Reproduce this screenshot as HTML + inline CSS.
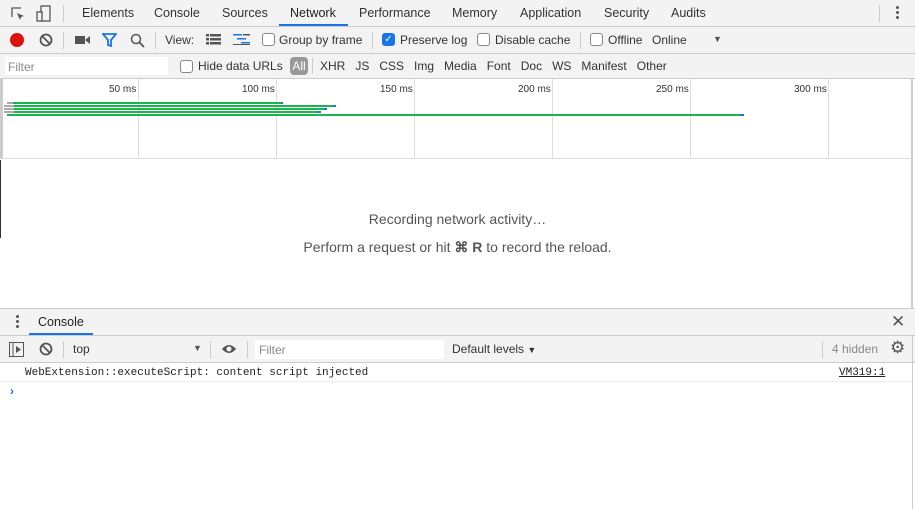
<!DOCTYPE html>
<html><head><meta charset="utf-8"><style>
*{box-sizing:border-box;margin:0;padding:0}
body{width:915px;height:509px;overflow:hidden;background:#fff;font-family:"Liberation Sans",sans-serif;font-size:12px;color:#333;position:relative}
.a{position:absolute;white-space:nowrap}
.bar{position:absolute;left:0;width:915px;background:#f3f3f3;border-bottom:1px solid #ccc}
.sep{position:absolute;width:1px;background:#ccc}
.cb{position:absolute;width:13px;height:13px;border:1px solid #888;border-radius:3px;background:#fff}
.g{position:absolute;height:2px;background:#1db34f}
.vl{position:absolute;top:79px;height:80px;width:1px;background:#ddd}
.t{position:absolute;top:84px;font-size:10px;color:#333}
</style></head><body>
<!-- tab bar -->
<div class="bar" style="top:0;height:27px"></div>
<svg class="a" style="left:9px;top:5px" width="18" height="18" viewBox="0 0 18 18"><path d="M3 12V3h9" fill="none" stroke="#555" stroke-width="1.3"/><path d="M8 8l7 3-3 1-1 3z" fill="#555"/></svg>
<svg class="a" style="left:36px;top:5px" width="16" height="18" viewBox="0 0 16 18"><rect x="5" y="1" width="9" height="15" fill="none" stroke="#555" stroke-width="1.3"/><rect x="1" y="7" width="5" height="9" fill="#f3f3f3" stroke="#555" stroke-width="1.3"/></svg>
<div class="sep" style="left:63px;top:5px;height:17px"></div>
<div class="a" style="left:82px;top:6px;font-size:12.5px">Elements</div>
<div class="a" style="left:154px;top:6px;font-size:12.5px">Console</div>
<div class="a" style="left:222px;top:6px;font-size:12.5px">Sources</div>
<div class="a" style="left:290px;top:6px;font-size:12.5px;color:#222">Network</div>
<div class="a" style="left:279px;top:24px;width:69px;height:2px;background:#1a73e8"></div>
<div class="a" style="left:359px;top:6px;font-size:12.5px">Performance</div>
<div class="a" style="left:452px;top:6px;font-size:12.5px">Memory</div>
<div class="a" style="left:520px;top:6px;font-size:12.5px">Application</div>
<div class="a" style="left:604px;top:6px;font-size:12.5px">Security</div>
<div class="a" style="left:671px;top:6px;font-size:12.5px">Audits</div>
<div class="sep" style="left:879px;top:5px;height:17px"></div>
<div class="a" style="left:896px;top:6px;width:3px;height:3px;background:#555;border-radius:50%;box-shadow:0 5px #555,0 10px #555"></div>
<!-- network toolbar -->
<div class="bar" style="top:27px;height:27px"></div>
<div class="a" style="left:10px;top:33px;width:14px;height:14px;border-radius:50%;background:#e01010"></div>
<svg class="a" style="left:39px;top:33px" width="14" height="14"><circle cx="7" cy="7" r="5.5" fill="none" stroke="#555" stroke-width="1.8"/><path d="M3 3l8 8" stroke="#555" stroke-width="1.8"/></svg>
<div class="sep" style="left:63px;top:32px;height:17px"></div>
<svg class="a" style="left:75px;top:34px" width="16" height="12"><rect x="0" y="2" width="10" height="8" fill="#555"/><path d="M10 6l5-4v8z" fill="#555"/></svg>
<svg class="a" style="left:102px;top:33px" width="15" height="14"><path d="M1 1h13l-5 6v6l-3-1v-5z" fill="none" stroke="#1a73e8" stroke-width="1.8"/></svg>
<svg class="a" style="left:130px;top:33px" width="15" height="15"><circle cx="6" cy="6" r="4.5" fill="none" stroke="#555" stroke-width="1.5"/><path d="M9.5 9.5l4.5 4.5" stroke="#555" stroke-width="1.8"/></svg>
<div class="sep" style="left:155px;top:32px;height:17px"></div>
<div class="a" style="left:165px;top:33px">View:</div>
<svg class="a" style="left:206px;top:34px" width="16" height="11"><g fill="#555"><rect x="0" y="0" width="3" height="2.5"/><rect x="4" y="0" width="11" height="2.5"/><rect x="0" y="4" width="3" height="2.5"/><rect x="4" y="4" width="11" height="2.5"/><rect x="0" y="8" width="3" height="2.5"/><rect x="4" y="8" width="11" height="2.5"/></g></svg>
<svg class="a" style="left:233px;top:34px" width="18" height="12"><g fill="#1a73e8"><rect x="0" y="0" width="9" height="1.5"/><rect x="4" y="4" width="9" height="1.5"/><rect x="8" y="8" width="9" height="1.5"/></g><g fill="#555"><rect x="10" y="0" width="7" height="1.5"/><rect x="0" y="10" width="17" height="1"/></g></svg>
<div class="cb" style="left:262px;top:33px"></div>
<div class="a" style="left:279px;top:33px">Group by frame</div>
<div class="sep" style="left:372px;top:32px;height:17px"></div>
<div class="cb" style="left:382px;top:33px;background:#1a73e8;border-color:#1a73e8;color:#fff;font-size:10px;line-height:11px;text-align:center">✓</div>
<div class="a" style="left:400px;top:33px">Preserve log</div>
<div class="cb" style="left:477px;top:33px"></div>
<div class="a" style="left:495px;top:33px">Disable cache</div>
<div class="sep" style="left:580px;top:32px;height:17px"></div>
<div class="cb" style="left:590px;top:33px"></div>
<div class="a" style="left:608px;top:33px">Offline</div>
<div class="a" style="left:652px;top:33px">Online</div>
<div class="a" style="left:713px;top:34px;font-size:9px;color:#555">▼</div>
<!-- filter bar -->
<div class="bar" style="top:54px;height:25px"></div>
<div class="a" style="left:5px;top:57px;width:163px;height:18px;background:#fff"></div>
<div class="a" style="left:8px;top:60px;color:#888">Filter</div>
<div class="cb" style="left:180px;top:60px"></div>
<div class="a" style="left:198px;top:59px">Hide data URLs</div>
<div class="a" style="left:290px;top:57px;width:18px;height:18px;border-radius:4px;background:#999;color:#fff;font-size:12px;line-height:18px;text-align:center">All</div>
<div class="sep" style="left:312px;top:58px;height:16px"></div>
<div class="a" style="left:320px;top:59px">XHR&nbsp;&nbsp;&nbsp;JS&nbsp;&nbsp;&nbsp;CSS&nbsp;&nbsp;&nbsp;Img&nbsp;&nbsp;&nbsp;Media&nbsp;&nbsp;&nbsp;Font&nbsp;&nbsp;&nbsp;Doc&nbsp;&nbsp;&nbsp;WS&nbsp;&nbsp;&nbsp;Manifest&nbsp;&nbsp;&nbsp;Other</div>
<!-- overview -->
<div class="a" style="left:0;top:79px;width:3px;height:80px;background:#ccc"></div>
<div class="a" style="left:911px;top:79px;width:2px;height:230px;background:#ccc"></div>
<div class="vl" style="left:138px"></div><div class="vl" style="left:276px"></div><div class="vl" style="left:414px"></div><div class="vl" style="left:552px"></div><div class="vl" style="left:690px"></div><div class="vl" style="left:828px"></div>
<div class="a" style="left:0;top:158px;width:912px;height:1px;background:#ddd"></div>
<div class="t" style="left:109px">50 ms</div><div class="t" style="left:242px">100 ms</div><div class="t" style="left:380px">150 ms</div><div class="t" style="left:518px">200 ms</div><div class="t" style="left:656px">250 ms</div><div class="t" style="left:794px">300 ms</div>
<div class="g" style="left:7px;top:102px;width:276px;background:linear-gradient(90deg,#aaa 6px,#1db34f 6px,#1db34f 274px,#1a73e8 274px)"></div>
<div class="g" style="left:4px;top:105px;width:332px;background:linear-gradient(90deg,#aaa 10px,#1db34f 10px,#1db34f 329px,#1a73e8 329px)"></div>
<div class="g" style="left:4px;top:108px;width:323px;background:linear-gradient(90deg,#aaa 10px,#1db34f 10px,#1db34f 320px,#1a73e8 320px)"></div>
<div class="g" style="left:4px;top:111px;width:317px;background:linear-gradient(90deg,#aaa 10px,#1db34f 10px,#1db34f 314px,#1a73e8 314px)"></div>
<div class="g" style="left:7px;top:114px;width:737px;background:linear-gradient(90deg,#1db34f 733px,#1a73e8 733px)"></div>
<div class="a" style="left:0;top:160px;width:1px;height:78px;background:#333"></div>
<div class="a" style="left:0;top:211px;width:915px;text-align:center;font-size:14px;color:#555">Recording network activity…</div>
<div class="a" style="left:0;top:239px;width:915px;text-align:center;font-size:14px;color:#555">Perform a request or hit <b>⌘ R</b> to record the reload.</div>
<!-- drawer -->
<div class="bar" style="top:308px;height:28px;border-top:1px solid #ccc"></div>
<div class="a" style="left:16px;top:315px;width:3px;height:3px;background:#555;border-radius:50%;box-shadow:0 5px #555,0 10px #555"></div>
<div class="a" style="left:38px;top:315px;font-size:12.5px;color:#222">Console</div>
<div class="a" style="left:29px;top:333px;width:64px;height:2px;background:#1a73e8"></div>
<div class="a" style="left:891px;top:312px;font-size:17px;color:#555">✕</div>
<div class="bar" style="top:336px;height:27px"></div>
<svg class="a" style="left:9px;top:342px" width="15" height="15"><rect x="0.5" y="0.5" width="14" height="14" fill="none" stroke="#555"/><path d="M4 1v13" stroke="#555"/><path d="M7 4l5 3.5-5 3.5z" fill="#555"/></svg>
<svg class="a" style="left:39px;top:342px" width="14" height="14"><circle cx="7" cy="7" r="5.5" fill="none" stroke="#555" stroke-width="1.8"/><path d="M3 3l8 8" stroke="#555" stroke-width="1.8"/></svg>
<div class="sep" style="left:63px;top:341px;height:17px"></div>
<div class="a" style="left:73px;top:342px">top</div>
<div class="a" style="left:193px;top:343px;font-size:9px;color:#555">▼</div>
<div class="sep" style="left:210px;top:341px;height:17px"></div>
<svg class="a" style="left:221px;top:343px" width="16" height="12"><path d="M1 6q7-8 14 0q-7 8-14 0z" fill="#555"/><circle cx="8" cy="6" r="2.5" fill="#f3f3f3"/></svg>
<div class="sep" style="left:247px;top:341px;height:17px"></div>
<div class="a" style="left:255px;top:340px;width:189px;height:19px;background:#fff"></div>
<div class="a" style="left:259px;top:343px;color:#888">Filter</div>
<div class="a" style="left:452px;top:342px">Default levels <span style="font-size:9px">▼</span></div>
<div class="sep" style="left:822px;top:341px;height:17px"></div>
<div class="a" style="left:832px;top:342px;color:#888">4 hidden</div>
<div class="a" style="left:890px;top:338px;font-size:17px;color:#555">⚙</div>
<div class="a" style="left:25px;top:367px;font-family:'Liberation Mono',monospace;font-size:11px;color:#222">WebExtension::executeScript: content script injected</div>
<div class="a" style="left:839px;top:367px;font-family:'Liberation Mono',monospace;font-size:11px;color:#222;text-decoration:underline">VM319:1</div>
<div class="a" style="left:0;top:381px;width:912px;height:1px;background:#eee"></div>
<div class="a" style="left:10px;top:384px;color:#1a73e8;font-size:12px;font-weight:bold">›</div>
<div class="a" style="left:912px;top:336px;width:1px;height:173px;background:#ccc"></div>
</body></html>
